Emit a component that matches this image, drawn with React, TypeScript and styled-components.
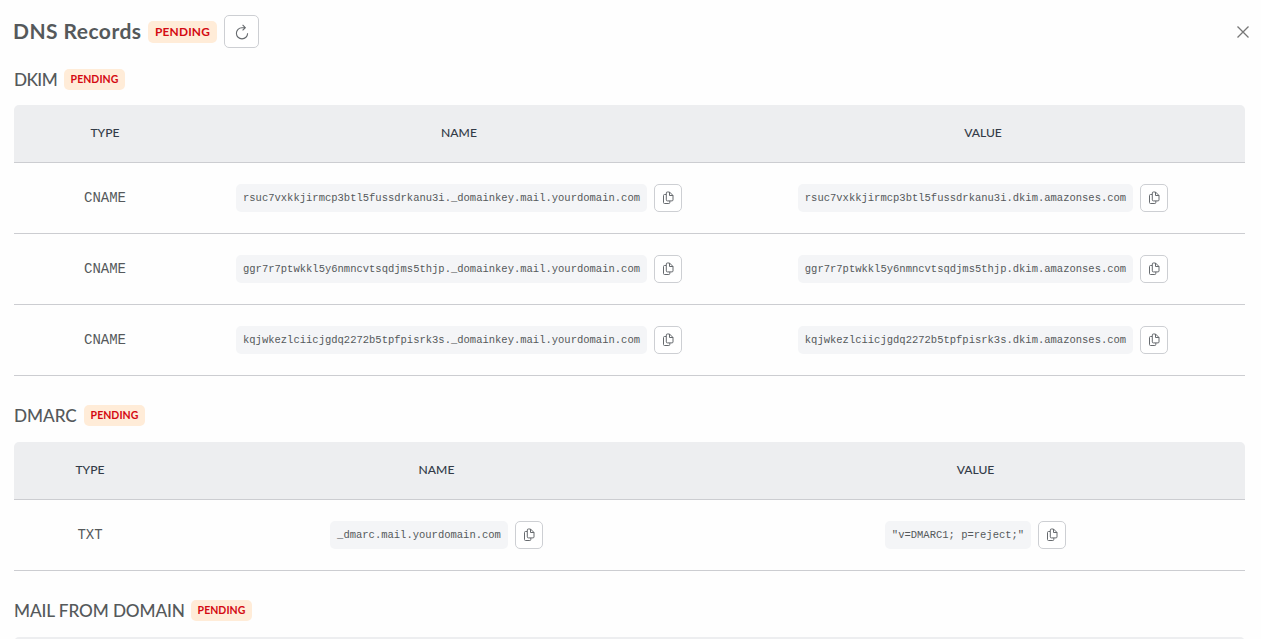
import React from "react";
import styled, { createGlobalStyle } from "styled-components";

const GlobalStyle = createGlobalStyle`
  * { box-sizing: border-box; }
  html, body { margin: 0; background: #fefefe; }
  body { height: 639px; overflow: hidden; font-family: Lato, "Liberation Sans", sans-serif; color: #55595b; }
`;

const Page = styled.main`
  padding: 15px 16px 0 14px;
  height: 639px;
  overflow: hidden;
`;

const Header = styled.header`
  display: flex;
  align-items: center;
  height: 33px;
`;

const Title = styled.h1`
  margin: 0 8px 0 -1px;
  width: 127px;
  font-size: 21px;
  line-height: 32px;
  height: 33px;
  font-weight: 700;
  white-space: nowrap;
  letter-spacing: 0.45px;
`;

const Badge = styled.span<{ $large?: boolean }>`
  display: inline-flex;
  justify-content: center;
  align-items: center;
  width: ${(p) => (p.$large ? 69 : 61)}px;
  height: ${(p) => (p.$large ? 22 : 21)}px;
  padding-bottom: ${(p) => (p.$large ? 1 : 2)}px;
  border-radius: 5px;
  background: #ffecd8;
  color: #d40a12;
  font-weight: 700;
  font-size: ${(p) => (p.$large ? 11.9 : 10.5)}px;
  letter-spacing: ${(p) => (p.$large ? 0.2 : 0.05)}px;
`;

const IconButton = styled.button<{ $large?: boolean }>`
  display: flex;
  align-items: center;
  justify-content: center;
  flex: none;
  width: ${(p) => (p.$large ? 35 : 28)}px;
  height: ${(p) => (p.$large ? 33 : 28)}px;
  margin-left: 7px;
  padding: 0;
  border: 1px solid #cdcfd3;
  border-radius: 5px;
  background: #fff;
  color: #666a6e;
`;

const CloseButton = styled.button`
  display: flex;
  margin-left: auto;
  margin-right: -5px;
  padding: 0;
  border: 0;
  background: none;
  color: #777;
`;

const SectionHead = styled.div<{ $first?: boolean }>`
  display: flex;
  align-items: center;
  height: 21px;
  margin: ${(p) => (p.$first ? 21 : 29)}px 0 ${(p) => (p.$first ? 15 : 16)}px;
`;

const SectionTitle = styled.h2<{ $width: number; $tracking: number }>`
  width: ${(p) => p.$width}px;
  margin: 0 8px 0 0;
  font-size: 17.2px;
  line-height: 21px;
  font-weight: 500;
  white-space: nowrap;
  letter-spacing: ${(p) => p.$tracking}px;
`;

const Table = styled.div<{ $columns: string }>`
  --columns: ${(p) => p.$columns};
`;

const HeadRow = styled.div`
  display: grid;
  grid-template-columns: var(--columns);
  align-items: center;
  height: 58px;
  padding-bottom: 2px;
  border-bottom: 1px solid #cccdd1;
  border-radius: 5px 5px 0 0;
  background: #edeef0;
  color: #333b48;
  font-size: 12.1px;
  font-weight: 500;
  text-align: center;
`;

const Row = styled.div`
  display: grid;
  grid-template-columns: var(--columns);
  align-items: center;
  height: 71px;
  border-bottom: 1px solid #cccdd1;
`;

const Kind = styled.div`
  font: 14px "Liberation Mono", monospace;
  text-align: center;
`;

const Copyable = styled.div`
  display: flex;
  justify-content: center;
`;

const Code = styled.code`
  height: 28px;
  padding: 0 7px;
  border-radius: 5px;
  background: #f4f5f7;
  font: 10.5px/29px "Liberation Mono", monospace;
  white-space: nowrap;
`;

const CopyIcon = () => (
  <svg width="12" height="14" viewBox="0 0 12 14" fill="none" stroke="currentColor" strokeWidth="1" strokeLinejoin="round">
    <path d="M5.3 1h2.2L11 4.5v4.4q0 1-1 1H5.3q-1 0-1-1V2q0-1 1-1Z" />
    <path d="M7.5 1v3.5H11M4 3.5H2.5q-1 0-1 1v7q0 1 1 1h4.3q1 0 1-1V10" />
  </svg>
);

const RefreshIcon = () => (
  <svg width="14" height="16" viewBox="0 0 14 16" fill="none" stroke="currentColor" strokeWidth="1.1">
    <path d="M9.8 3.7H7A5.6 5.6 0 1 0 12.6 9.3M7.6.9l2.7 2.8-2.7 2.7" />
  </svg>
);

const CloseIcon = () => (
  <svg width="14" height="14" viewBox="0 0 14 14" fill="none" stroke="currentColor" strokeWidth="1.3">
    <path d="m1.5 1.5 11 11m0-11-11 11" />
  </svg>
);

interface DnsRecord {
  type: string;
  name: string;
  value: string;
}

const dkim: DnsRecord[] = ["rsuc7vxkkjirmcp3btl5fussdrkanu3i", "ggr7r7ptwkkl5y6nmncvtsqdjms5thjp", "kqjwkezlciicjgdq2272b5tpfpisrk3s"].map((key) => ({
  type: "CNAME",
  name: `${key}._domainkey.mail.yourdomain.com`,
  value: `${key}.dkim.amazonses.com`,
}));

const dmarc: DnsRecord[] = [{ type: "TXT", name: "_dmarc.mail.yourdomain.com", value: '"v=DMARC1; p=reject;"' }];

const CopyCell = ({ text }: { text: string }) => (
  <Copyable>
    <Code>{text}</Code>
    <IconButton aria-label="Copy"><CopyIcon /></IconButton>
  </Copyable>
);

const RecordTable = ({ columns, records }: { columns: string; records: DnsRecord[] }) => (
  <Table $columns={columns}>
    <HeadRow>
      <span>TYPE</span>
      <span>NAME</span>
      <span>VALUE</span>
    </HeadRow>
    {records.map((r) => (
      <Row key={r.name}>
        <Kind>{r.type}</Kind>
        <CopyCell text={r.name} />
        <CopyCell text={r.value} />
      </Row>
    ))}
  </Table>
);

export default function App() {
  return (
    <>
      <GlobalStyle />
      <Page>
        <Header>
          <Title>DNS Records</Title>
          <Badge $large>PENDING</Badge>
          <IconButton $large aria-label="Refresh"><RefreshIcon /></IconButton>
          <CloseButton aria-label="Close"><CloseIcon /></CloseButton>
        </Header>
        <SectionHead $first>
          <SectionTitle $width={42} $tracking={-0.6}>DKIM</SectionTitle>
          <Badge>PENDING</Badge>
        </SectionHead>
        <RecordTable columns="182px 526px 522px" records={dkim} />
        <SectionHead>
          <SectionTitle $width={62} $tracking={-0.05}>DMARC</SectionTitle>
          <Badge>PENDING</Badge>
        </SectionHead>
        <RecordTable columns="152px 541px 537px" records={dmarc} />
        <SectionHead>
          <SectionTitle $width={169} $tracking={-0.1}>MAIL FROM DOMAIN</SectionTitle>
          <Badge>PENDING</Badge>
        </SectionHead>
        <Table $columns="152px 541px 537px">
          <HeadRow />
        </Table>
      </Page>
    </>
  );
}
